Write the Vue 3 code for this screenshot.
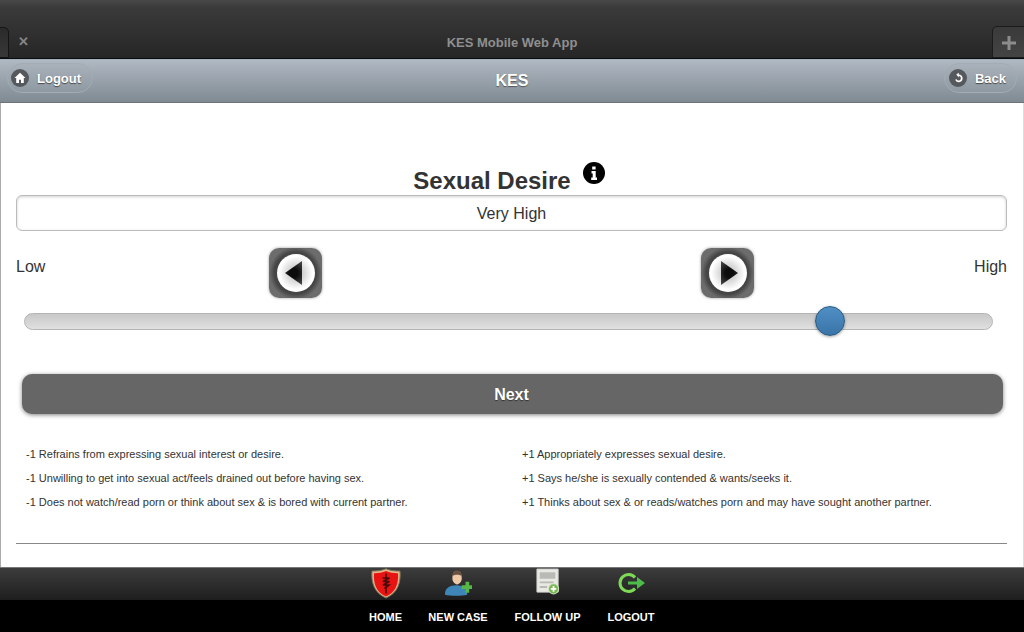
<template>
  <div class="page">
    <!-- Browser title strip -->
    <div class="app-bar">
      <span class="tab-left"></span>
      <span class="close-x">✕</span>
      <span class="app-title">KES Mobile Web App</span>
      <span class="tab-plus">
        <svg width="14" height="14" viewBox="0 0 14 14"><path d="M5.5 0h3v5.5H14v3H8.500V14h-3V8.500H0v-3h5.500z" fill="#8c8c8c" /></svg>
      </span>
    </div>

    <!-- Header -->
    <header class="header">
      <button class="head-btn">
        <span class="head-icon">
          <svg width="12" height="12" viewBox="0 0 12 12"><path d="M6 .8.500 6h1.700v5h2.800V7.700h2V11h2.800V6h1.700z" fill="#fff" /></svg>
        </span>
        Logout
      </button>
      <h1>KES</h1>
      <button class="head-btn back">
        <span class="head-icon">
          <svg width="12" height="12" viewBox="0 0 12 12"><path d="M4.300 2.500 6.800.8v1.600a3.900 3.900 0 1 1-3.700 5.400l1.600-.6A2.200 2.200 0 1 0 6.800 4.100v1.500z" fill="#fff" /></svg>
        </span>
        Back
      </button>
    </header>

    <!-- Main content -->
    <main class="content">
      <div class="title-row">
        <h2>Sexual Desire</h2>
        <span class="info">
          <svg width="22" height="22" viewBox="0 0 22 22">
            <circle cx="11" cy="11" r="11" fill="#000" />
            <path d="M9.200 4.500h3.400v3h-3.400zM8.500 9h4.200v6.500h1.300V18H8.200v-2.500h1.500v-4H8.500z" fill="#fff" />
          </svg>
        </span>
      </div>
      <div class="value-box">{{ level }}</div>

      <div class="stepper">
        <span class="end-label">Low</span>
        <button class="step-btn">
          <span class="step-disc"><span class="arrow arrow-left"></span></span>
        </button>
        <span></span>
        <button class="step-btn">
          <span class="step-disc"><span class="arrow arrow-right"></span></span>
        </button>
        <span class="end-label right">High</span>
      </div>

      <div class="slider">
        <span class="thumb"></span>
      </div>

      <button class="next-btn">Next</button>

      <div class="notes">
        <ul>
          <li v-for="item in minusNotes" :key="item">{{ item }}</li>
        </ul>
        <ul>
          <li v-for="item in plusNotes" :key="item">{{ item }}</li>
        </ul>
      </div>

      <hr class="rule" />
    </main>

    <!-- Footer nav -->
    <footer class="footer">
      <div class="foot-icons">
        <span class="foot-item home">
          <svg width="30" height="31" viewBox="0 0 30 31">
            <path d="M15 .800C19 2.500 24 3.300 29 3c1 11-2 22-14 27C3 25 0 14 1 3c5 .300 10-.500 14-2.200z" fill="#e9b48a" stroke="#75755a" />
            <path d="M15 3c4 1.500 8 2.300 12 2.200.700 10-2 19-12 23.300C5 24.200 2.300 15.200 3 5.200 7 5.300 11 4.500 15 3z" fill="#e81414" />
            <path d="M15 5.500v20M11.500 10h7l-6.500 3.500h6.500L12 17h6l-4.500 3.500" fill="none" stroke="#4a0a0a" stroke-width="1.600" />
          </svg>
        </span>
        <span class="foot-item case">
          <svg width="28" height="31" viewBox="0 2 30 30">
            <path d="M1 29c0-7 5-10 12-10s11 3 12 10c-6 1.500-18 1.500-24 0z" fill="#3f86b8" />
            <path d="M9 12c0-6 1.500-8.500 5-8.500s5 2.500 5 8.500c0 3-2.500 6-5 6s-5-3-5-6z" fill="#edc9a8" />
            <path d="M9 9c0-4 2-6 5-6s5 2 5 6c-3-2-7-2-10 0z" fill="#6a5242" />
            <path d="M19 19h4v-4h4v4h3v4h-3v4h-4v-4h-4z" fill="#58b548" />
          </svg>
        </span>
        <span class="foot-item follow">
          <svg width="24" height="27" viewBox="0 0 26 28">
            <path d="M1 .5h23v25H1z" fill="#e9e9e4" stroke="#cfcfcf" />
            <path d="M4 4h17v7H4zM4 14h15v2H4zM4 19h8v2H4z" fill="#b9b9b5" />
            <circle cx="19" cy="22" r="5.500" fill="#76b852" stroke="#dfe8d0" />
            <path d="M18 19h2v2h2v2h-2v2h-2v-2h-2v-2h2z" fill="#fff" />
          </svg>
        </span>
        <span class="foot-item out">
          <svg class="out-icon" width="30" height="24" viewBox="0 0 30 24">
            <path d="M19 6.500A8.500 8.500 0 1 0 19 17.500" fill="none" stroke="#7ed957" stroke-width="3" />
            <path d="M12 10.500h9V6l8 6-8 6v-4.500h-9z" fill="#4dbb4a" />
          </svg>
        </span>
      </div>
      <div class="foot-labels">
        <span class="foot-item home">HOME</span>
        <span class="foot-item case">NEW CASE</span>
        <span class="foot-item follow">FOLLOW UP</span>
        <span class="foot-item out">LOGOUT</span>
      </div>
    </footer>
  </div>
</template>

<script setup>
const level = 'Very High'

const minusNotes = [
  '-1 Refrains from expressing sexual interest or desire.',
  '-1 Unwilling to get into sexual act/feels drained out before having sex.',
  '-1 Does not watch/read porn or think about sex & is bored with current partner.'
]

const plusNotes = [
  '+1 Appropriately expresses sexual desire.',
  '+1 Says he/she is sexually contended & wants/seeks it.',
  '+1 Thinks about sex & or reads/watches porn and may have sought another partner.'
]
</script>

<style>
html,
body {
  margin: 0;
  background: #fff;
}
</style>

<style scoped>
.page {
  width: 1024px;
  height: 632px;
  display: flex;
  flex-direction: column;
  overflow: hidden;
  font-family: "Liberation Sans", Arial, sans-serif;
}

/* Browser title strip */
.app-bar {
  position: relative;
  height: 59px;
  flex: none;
  box-sizing: border-box;
  padding-top: 26px;
  background: linear-gradient(#484848 0, #3a3a3a 8px, #262626 100%);
  border-bottom: 1px solid #0c0c0c;
  text-align: center;
}

.app-title {
  display: block;
  font-size: 13px;
  line-height: 33px;
  font-weight: bold;
  color: #8f8f8f;
}

.tab-left {
  position: absolute;
  left: -6px;
  bottom: 0;
  width: 15px;
  height: 31px;
  box-sizing: border-box;
  background: linear-gradient(#2a2a2a, #383838);
  border: 1px solid #151515;
  border-radius: 5px 5px 0 0;
}

.close-x {
  position: absolute;
  left: 18px;
  top: 34px;
  font-size: 13px;
  line-height: 16px;
  font-weight: bold;
  color: #858585;
}

.tab-plus {
  position: absolute;
  right: -6px;
  bottom: 0;
  width: 38px;
  height: 32px;
  box-sizing: border-box;
  padding: 9px 0 0 9px;
  background: linear-gradient(#3a3a3a, #444);
  border: 1px solid #1c1c1c;
  border-radius: 5px 5px 0 0;
}

.tab-plus svg {
  display: block;
}

/* Header */
.header {
  height: 44px;
  flex: none;
  box-sizing: border-box;
  display: flex;
  align-items: center;
  justify-content: space-between;
  padding: 0 7px 6px;
  background: linear-gradient(#b0b8c2, #7f8a92);
  border-top: 1px solid #9fb0c0;
  border-bottom: 1px solid #6c7378;
}

.header h1 {
  position: absolute;
  left: 0;
  right: 0;
  margin: 6px 0 0;
  text-align: center;
  font-size: 16px;
  font-weight: bold;
  color: #fff;
  text-shadow: 0 1px 1px #555;
  pointer-events: none;
}

.head-btn {
  display: flex;
  align-items: center;
  gap: 8px;
  height: 30px;
  padding: 0 11px 0 3px;
  margin: 0;
  font: bold 13px "Liberation Sans", Arial, sans-serif;
  color: #fff;
  text-shadow: 0 1px 1px #444;
  background: linear-gradient(#a9b1bb, #8e99a1);
  border: 1px solid #a3acb5;
  border-radius: 15px;
}

.head-btn.back {
  padding: 0 10px 0 4px;
}

.head-icon {
  width: 18px;
  height: 18px;
  border-radius: 50%;
  background: #55585c;
  display: flex;
  align-items: center;
  justify-content: center;
}

/* Main content */
.content {
  flex: 1;
  min-height: 0;
  box-sizing: border-box;
  padding: 59px 16px 0 15px;
  background: #fff;
  border-left: 1px solid #aaa;
  border-right: 1px solid #ddd;
}

.title-row {
  display: flex;
  justify-content: center;
  padding-right: 5px;
  height: 33px;
}

.title-row h2 {
  margin: 0;
  font-size: 24px;
  line-height: 38px;
  font-weight: bold;
  color: #333;
}

.info {
  margin: 0 0 0 12px;
  height: 22px;
}

.info svg {
  display: block;
}

.value-box {
  height: 36px;
  box-sizing: border-box;
  border: 1px solid #bbb;
  border-radius: 6px;
  box-shadow: inset 0 1px 3px rgba(0, 0, 0, 0.18);
  text-align: center;
  font-size: 16px;
  line-height: 35px;
  color: #333;
}

.stepper {
  display: grid;
  grid-template-columns: 253px 53px 379px 53px 253px;
  margin-top: 17px;
  height: 50px;
}

.end-label {
  font-size: 16px;
  line-height: 38px;
  color: #333;
}

.end-label.right {
  text-align: right;
}

.step-btn {
  width: 53px;
  height: 50px;
  padding: 0;
  border: none;
  border-radius: 10px;
  background: radial-gradient(circle at 50% 50%, #454545 58%, #6c6c6c 72%);
  box-shadow: 0 0 3px rgba(0, 0, 0, 0.4);
  display: flex;
  align-items: center;
  justify-content: center;
}

.step-disc {
  width: 38px;
  height: 38px;
  border-radius: 50%;
  background: radial-gradient(circle at 50% 50%, #b4b4b4 0, #fff 62%);
  display: flex;
  align-items: center;
  justify-content: center;
}

.arrow {
  width: 17px;
  height: 24px;
  background: radial-gradient(circle at 50% 50%, #0c0c0c 30%, #4e4e4e 100%);
}

.arrow-left {
  clip-path: polygon(100% 0, 100% 100%, 0 50%);
  margin-right: 4px;
}

.arrow-right {
  clip-path: polygon(0 0, 100% 50%, 0 100%);
  margin-left: 4px;
}

.slider {
  position: relative;
  height: 17px;
  margin: 15px 14px 0 8px;
  box-sizing: border-box;
  background: linear-gradient(#c8c8c8, #e0e0e0);
  border: 1px solid #b4b4b4;
  border-radius: 9px;
}

.thumb {
  position: absolute;
  left: 790px;
  top: -8px;
  width: 30px;
  height: 30px;
  box-sizing: border-box;
  border-radius: 50%;
  background: linear-gradient(#4f8fc4, #3a74a8);
  border: 1px solid #2a5a80;
  box-shadow: 0 1px 3px rgba(0, 0, 0, 0.35);
}

.next-btn {
  display: block;
  width: 981px;
  height: 40px;
  margin: 44px 0 0 6px;
  padding: 2px 2px 0 0;
  border: none;
  border-radius: 10px;
  background: #666;
  box-shadow: 0 1px 4px rgba(0, 0, 0, 0.5);
  font: bold 16px "Liberation Sans", Arial, sans-serif;
  color: #fff;
  text-shadow: 0 1px 1px #333;
}

.notes {
  display: grid;
  grid-template-columns: 496px 1fr;
  margin: 28px 0 0 10px;
}

.notes ul {
  list-style: none;
  margin: 0;
  padding: 0;
}

.notes li {
  font-size: 11px;
  line-height: 24px;
  color: #333;
}

.rule {
  margin: 29px 0 0;
  border: none;
  border-top: 1px solid #888;
}

/* Footer nav */
.footer {
  flex: none;
  height: 65px;
}

.foot-icons,
.foot-labels {
  display: flex;
  justify-content: center;
}

.foot-icons {
  height: 33px;
  background: linear-gradient(#3c3c3c, #1e1e1e);
  border-top: 1px solid #777;
  box-sizing: border-box;
}

.foot-labels {
  height: 32px;
  background: #000;
  font-size: 11px;
  font-weight: bold;
  line-height: 34px;
  color: #fff;
}

.foot-item {
  display: flex;
  justify-content: center;
  flex: none;
}

.foot-item.home {
  width: 59px;
}

.foot-item.case {
  width: 86px;
}

.foot-item.follow {
  width: 93px;
}

.foot-item.out {
  width: 74px;
}

.out-icon {
  margin-top: 3px;
}
</style>
